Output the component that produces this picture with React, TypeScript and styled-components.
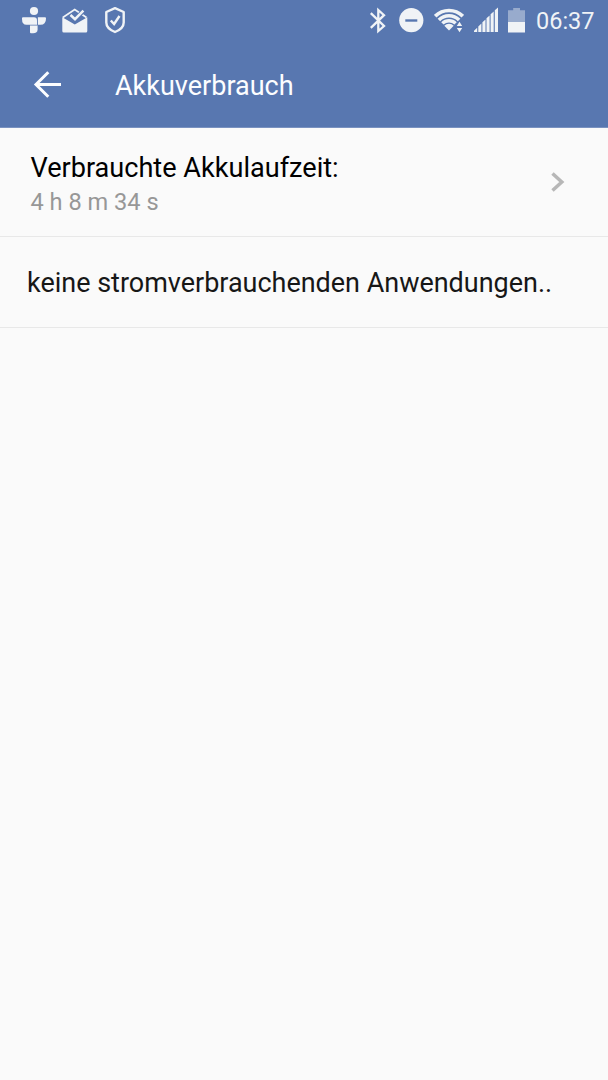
import React from 'react';
import styled, { createGlobalStyle } from 'styled-components';

const GlobalStyle = createGlobalStyle`
  * { box-sizing: border-box; }
  body { margin: 0; background: #fafafa; font-family: Roboto, sans-serif; }
`;

const Screen = styled.main`
  min-height: 1080px;
  background: #fafafa;
`;

const Header = styled.header`
  height: 128px;
  background: #5877b0;
  border-bottom: 1px solid #7a92c0;
  color: #fcfdff;
`;

const StatusBar = styled.div`
  display: flex;
  justify-content: space-between;
  height: 42px;
  padding: 0 13px 0 22px;
  color: #f0f3f6;
`;

const StatusGroup = styled.div<{ $gap: number }>`
  display: flex;
  gap: ${({ $gap }) => $gap}px;
`;

const StatusIcon = styled.svg`
  display: block;
  height: 42px;
  flex: none;
`;

const Clock = styled.time`
  width: 59px;
  margin-left: 1px;
  font-size: 23.5px;
  line-height: 43px;
  white-space: nowrap;
`;

const Toolbar = styled.div`
  display: flex;
  align-items: center;
  height: 85px;
  padding-left: 32px;
`;

const BackButton = styled.button`
  display: flex;
  padding: 0;
  border: 0;
  background: none;
  color: inherit;
`;

const Title = styled.h1`
  margin: 2px 0 0 53px;
  font-size: 27px;
  font-weight: 400;
  line-height: 32px;
`;

const Row = styled.section<{ $height: number; $inset: number }>`
  display: flex;
  align-items: center;
  justify-content: space-between;
  height: ${({ $height }) => $height}px;
  padding: 0 43px 0 ${({ $inset }) => $inset}px;
  border-bottom: 1px solid #e8e8e8;
`;

const Summary = styled.div`
  padding-top: 4px;
`;

const Label = styled.div`
  font-size: 27.1px;
  line-height: 36px;
  color: #000;
  white-space: nowrap;
`;

const Duration = styled.div`
  font-size: 23.6px;
  line-height: 32px;
  color: #979797;
`;

const Message = styled.p`
  margin: 2px 0 0;
  font-size: 26.98px;
  line-height: 36px;
  color: #171717;
  white-space: nowrap;
`;

export default function App() {
  return (
    <Screen>
      <GlobalStyle />
      <Header>
        <StatusBar>
          <StatusGroup $gap={16}>
            <StatusIcon width="24" viewBox="0 0 24 42" fill="currentColor">
              <circle cx="12" cy="11" r="4.1" />
              <path d="M1 17.2H12Q15 17.2 15 20.2V24.8H4.5Q0 24.8 0 19V18.2Q0 17.2 1 17.2Z" />
              <path d="M15.9 17.2H23Q24 17.2 24 18.2Q24 24.8 18.5 24.8H15.9Z" />
              <path d="M8 25.6H15.6V29.5Q15.6 33.3 11 33.3H9Q8 33.3 8 32.3Z" />
            </StatusIcon>
            <StatusIcon width="26" viewBox="0 0 26 42">
              <path d="M.8 17.5 12.7 9.6 24.5 17.5" fill="none" stroke="currentColor" strokeWidth="1.7" />
              <path d="M.3 17.2 12.8 24.5 25.3 17.2V31Q25.3 32.5 23.8 32.5H1.8Q.3 32.5 .3 31Z" fill="currentColor" />
              <path d="M8.5 15.3 13 19.6 21.2 11" fill="none" stroke="#5877b0" strokeWidth="4.3" />
              <path d="M8.5 15 13 19.2 21.4 10.7" fill="none" stroke="currentColor" strokeWidth="2.5" />
            </StatusIcon>
            <StatusIcon width="22" viewBox="0 0 22 42" fill="none" stroke="currentColor">
              <path d="M11 8.2 19.7 12V22.5Q19.7 28.5 11 32Q2.3 28.5 2.3 22.5V12Z" strokeWidth="2.4" strokeLinejoin="round" />
              <path d="M6.8 20.5 10.1 24 15.5 16" strokeWidth="2.4" />
            </StatusIcon>
          </StatusGroup>
          <StatusGroup $gap={10}>
            <StatusIcon width="20" viewBox="0 0 20 42" fill="none" stroke="currentColor" strokeWidth="2.3">
              <path d="M1.8 13.2 15 26 9.3 31V10L15 15.2 1.8 27.8" />
            </StatusIcon>
            <StatusIcon width="25" viewBox="0 0 25 42">
              <circle cx="12.3" cy="20.2" r="12.1" fill="currentColor" />
              <path d="M6.3 20.5H18.3" stroke="#5877b0" strokeWidth="2.4" />
            </StatusIcon>
            <StatusIcon width="30" viewBox="0 0 30 42" fill="none" stroke="currentColor">
              <path d="M1.2 16.2A19.5 19.5 0 0 1 28.8 16.2" strokeWidth="3.6" />
              <path d="M4.9 19.9A14.3 14.3 0 0 1 25.1 19.9" strokeWidth="3.6" />
              <path d="M8.4 23.4A9.4 9.4 0 0 1 21.6 23.4" strokeWidth="3.4" />
              <path d="M10.3 25.7A6.6 6.6 0 0 1 19.7 25.7L15 30.6Z" fill="currentColor" stroke="none" />
              <path d="M25.5 21.7 28.2 26H22.8ZM22.8 28H28.2L25.5 32.3Z" fill="currentColor" stroke="#5877b0" strokeWidth="2" paintOrder="stroke" />
            </StatusIcon>
            <StatusIcon width="24" viewBox="0 0 24 42" fill="currentColor">
              <path d="M0 32V30.8L3.2 27.8V32ZM4.3 32V26.4L7.4 23.6V32ZM8.4 32V22.3L11.5 19.6V32ZM12.5 32V18.3L15.6 15.6V32ZM16.6 32V14.3L19.7 11.6V32ZM20.8 32V10.3L24 7.5V32Z" />
            </StatusIcon>
            <StatusIcon width="17" viewBox="0 0 17 42" fill="currentColor">
              <path d="M5.2 8H12V10.3H17V22H0V10.3H5.2Z" opacity=".42" />
              <path d="M0 22H17V32.5H0Z" />
            </StatusIcon>
            <Clock>06:37</Clock>
          </StatusGroup>
        </StatusBar>
        <Toolbar>
          <BackButton aria-label="Zurück">
            <svg width="30" height="28" viewBox="0 0 30 28" fill="none" stroke="currentColor" strokeWidth="3">
              <path d="M16.3 1.3 4 13.5 16.3 25.7M4 13.5H29" />
            </svg>
          </BackButton>
          <Title>Akkuverbrauch</Title>
        </Toolbar>
      </Header>
      <Row $height={109} $inset={30.5}>
        <Summary>
          <Label>Verbrauchte Akkulaufzeit:</Label>
          <Duration>4 h 8 m 34 s</Duration>
        </Summary>
        <svg width="14" height="20" viewBox="0 0 14 20" fill="none" stroke="#b7b7b7" strokeWidth="3.5">
          <path d="M1.5 1.5 10.8 10 1.5 18.5" />
        </svg>
      </Row>
      <Row $height={91} $inset={27}>
        <Message>keine stromverbrauchenden Anwendungen..</Message>
      </Row>
    </Screen>
  );
}
